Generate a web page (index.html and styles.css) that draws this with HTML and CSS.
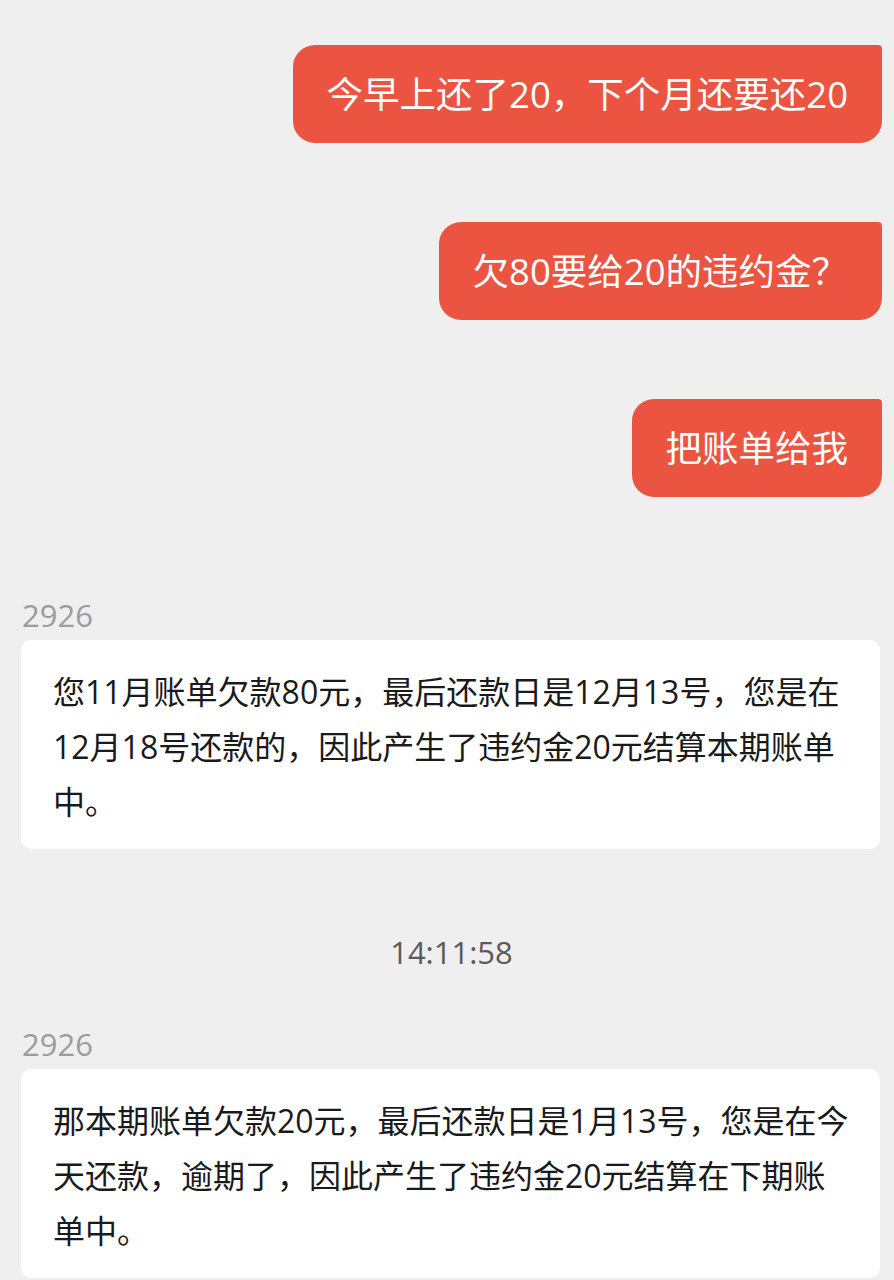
FILE: index.html
```html
<!DOCTYPE html>
<html lang="zh-CN">
<head>
<meta charset="utf-8">
<title>聊天</title>
<link rel="stylesheet" href="styles.css">
</head>
<body>
<main class="chat">
  <div class="bubble out first">今早上还了20，下个月还要还20</div>
  <div class="bubble out">欠80要给20的违约金？</div>
  <div class="bubble out">把账单给我</div>

  <div class="sender first-sender">2926</div>
  <div class="card">您11月账单欠款80元，最后还款日是12月13号，您是在12月18号还款的，因此产生了违约金20元结算本期账单中。</div>

  <div class="time">14:11:58</div>

  <div class="sender">2926</div>
  <div class="card">那本期账单欠款20元，最后还款日是1月13号，您是在今天还款，逾期了，因此产生了违约金20元结算在下期账单中。</div>
</main>
</body>
</html>
```

FILE: styles.css
```css
html, body {
  margin: 0;
  padding: 0;
  background: #efefef;
}

.chat {
  display: flex;
  flex-direction: column;
  padding: 45px 12px 40px 21px;
  font-family: "Open Sans", "Noto Sans CJK SC", sans-serif;
}

.bubble {
  align-self: flex-end;
  background: #ea5441;
  color: #ffffff;
  font-size: 36.5px;
  line-height: 50px;
  padding: 24px 34px;
  border-radius: 22px 4px 22px 22px;
  margin-top: 79px;
}

.bubble.first {
  margin-top: 0;
}

.sender {
  color: #9c9c9c;
  font-size: 31px;
  line-height: 40px;
  padding-left: 1px;
  margin-top: 52px;
}

.sender.first-sender {
  margin-top: 98px;
}

.card {
  background: #ffffff;
  color: #1a1a1a;
  font-size: 32px;
  line-height: 55px;
  padding: 24px 25px 20px 32px;
  border-radius: 10px;
  margin-top: 5px;
  margin-right: 2px;
}

.time {
  align-self: center;
  color: #5a5a5a;
  font-size: 31px;
  line-height: 40px;
  margin-top: 83px;
}
```
